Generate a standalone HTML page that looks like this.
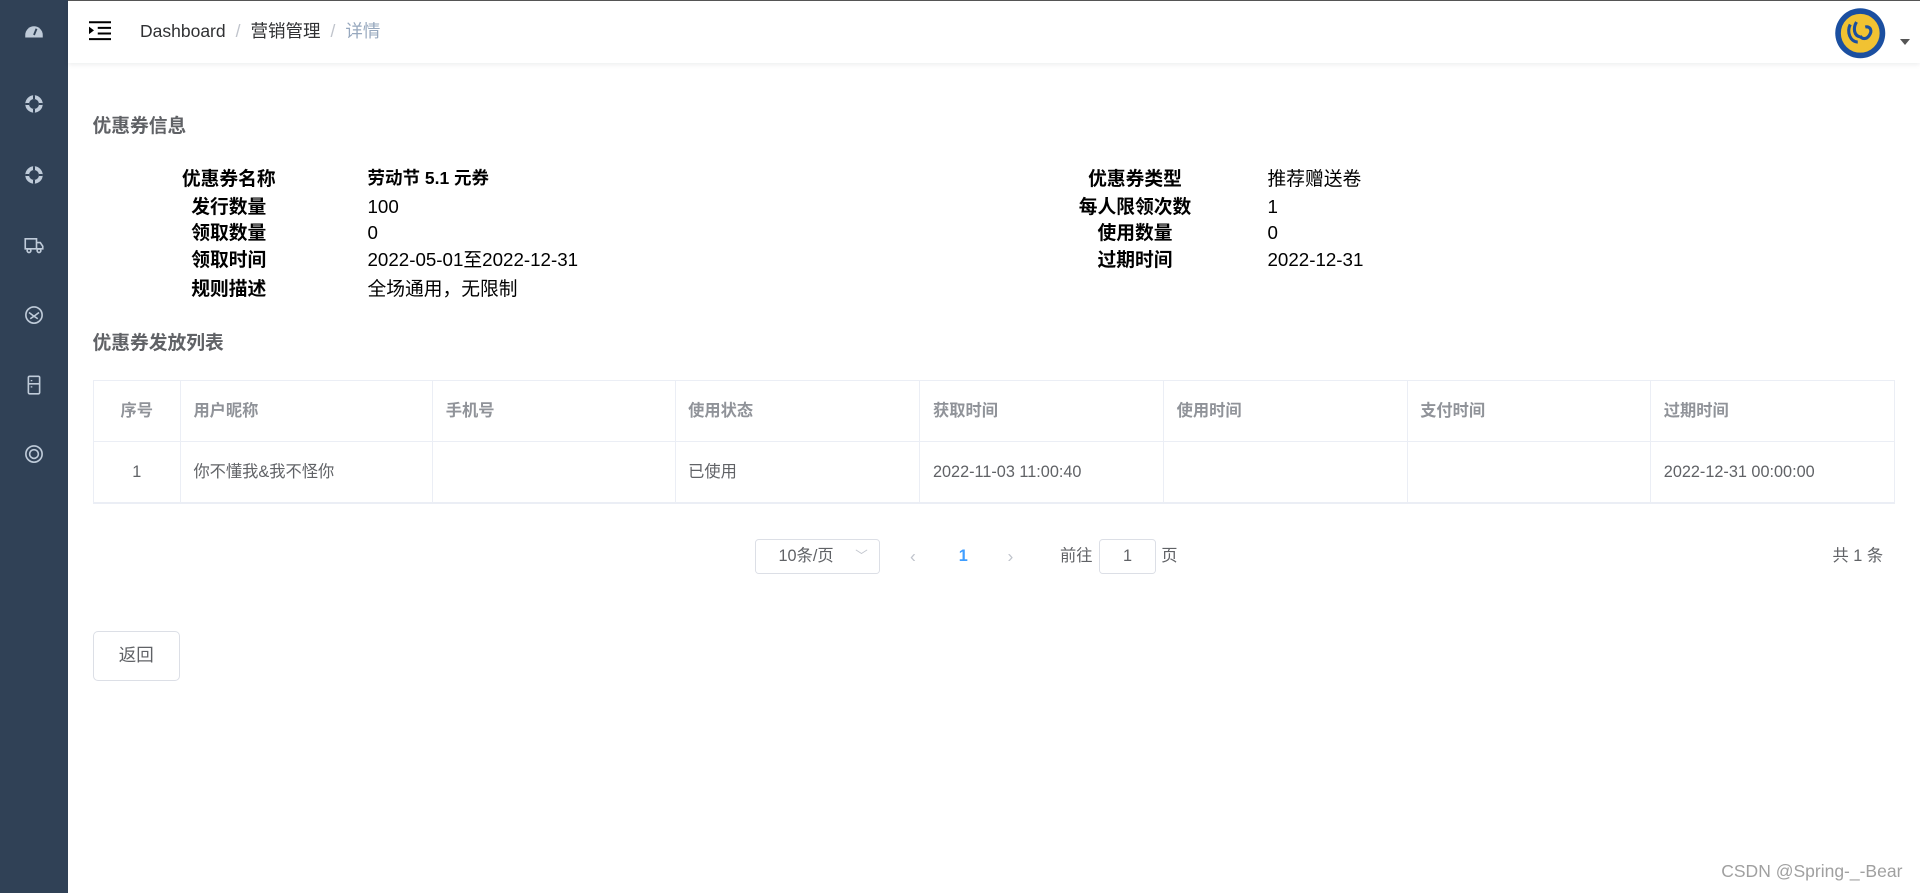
<!DOCTYPE html>
<html><head><meta charset="utf-8"><style>
html{zoom:1.25}
*{box-sizing:border-box;margin:0;padding:0}
body{width:1536px;height:713px;overflow:hidden;position:relative;background:#fff;font-family:"Liberation Sans","Noto Sans CJK SC",sans-serif;color:#606266;font-size:14px}
.side{position:absolute;left:0;top:0;width:54px;height:714px;background:#304156}
.side svg{position:absolute;left:19px;width:16px;height:16px}
.top{position:absolute;left:54px;top:0;right:0;height:50px;box-shadow:0 1px 4px rgba(0,21,41,.08);border-top:1px solid #555}
.abs{position:absolute;white-space:nowrap}
.bc{top:14px;font-size:14px;color:#303133;line-height:20px}
.bc .s{color:#c0c4cc;margin:0 8px}
h3{position:absolute;font-size:15px;font-weight:bold;color:#606266;line-height:20px}
.lab{position:absolute;width:130px;text-align:center;font-weight:bold;color:#000;font-size:15px;line-height:22px;height:22px}
.val{position:absolute;color:#000;font-size:15px;line-height:22px;height:22px;white-space:nowrap}
table{position:absolute;left:74px;top:304px;width:1442px;border-collapse:collapse;font-size:13px}
td,th{border:1px solid #ebeef5;height:49px;text-align:left;padding-left:10px;line-height:20px}
th{color:#909399;font-weight:bold}
tr:last-child td{border-bottom:2px solid #ebeef5}
</style></head><body>
<div class="side">
<svg style="top:16px" viewBox="0 0 16 16"><path d="M1 12a7 7 0 0 1 14 0v2H1z" fill="#bfcbd9"/><path d="M8 12l2-5" stroke="#304156" stroke-width="1.5"/></svg>
<svg style="top:75px" viewBox="0 0 16 16"><circle cx="8" cy="8" r="5.5" fill="none" stroke="#bfcbd9" stroke-width="3"/><path d="M8 1v3M8 12v3M1 8h3M12 8h3" stroke="#304156" stroke-width="1.6"/></svg>
<svg style="top:132px" viewBox="0 0 16 16"><circle cx="8" cy="8" r="5.5" fill="none" stroke="#bfcbd9" stroke-width="3"/><path d="M8 1v3M8 12v3M1 8h3M12 8h3" stroke="#304156" stroke-width="1.6"/></svg>
<svg style="top:188px" viewBox="0 0 16 16" fill="none" stroke="#bfcbd9" stroke-width="1.3"><path d="M1 3h9v8H1zM10 6h3l2 3v2h-5"/><circle cx="4" cy="12.5" r="1.5"/><circle cx="12" cy="12.5" r="1.5"/></svg>
<svg style="top:244px" viewBox="0 0 16 16" fill="none" stroke="#bfcbd9" stroke-width="1.3"><circle cx="8" cy="8" r="6.5"/><path d="M4 6l4 3 4-3M5 11l3-2 3 2"/></svg>
<svg style="top:300px" viewBox="0 0 16 16" fill="none" stroke="#bfcbd9" stroke-width="1.3"><rect x="3.5" y="1" width="9" height="14" rx="1"/><path d="M3.5 7h9M6 4v1M6 9v1"/></svg>
<svg style="top:355px" viewBox="0 0 16 16" fill="none" stroke="#bfcbd9" stroke-width="1.3"><circle cx="8" cy="8" r="6.5"/><circle cx="8" cy="8" r="3.5"/></svg>
</div>
<div class="top">
<svg class="abs" style="left:17px;top:16px" width="18" height="16" viewBox="0 0 18 16"><path d="M0 1h18M7 5.5h11M7 10h11M0 14.5h18" stroke="#000" stroke-width="1.6"/><path d="M0 4.5l4 3-4 3z" fill="#000"/></svg>
<div class="abs bc" style="left:58px">Dashboard<span class="s">/</span>营销管理<span class="s">/</span><span style="color:#97a8be">详情</span></div>
<svg class="abs" style="left:1413px;top:5px" width="42" height="42" viewBox="0 0 42 42"><circle cx="21" cy="21" r="20" fill="#1b4fa0"/><circle cx="21" cy="21" r="16" fill="#f1c232"/><circle cx="21" cy="21" r="16" fill="none" stroke="#1b4fa0" stroke-width="1"/><path d="M13 14c-3 6 0 14 6 14M18 12c-3 5-2 11 3 12M25 16c4-1 6 3 3 7-2 3-6 3-7 0" stroke="#1b4fa0" stroke-width="2.5" fill="none"/></svg>
<div class="abs" style="left:1466px;top:30px;width:0;height:0;border:4px solid transparent;border-top:5px solid #555"></div>
</div>
<h3 style="left:74px;top:90px">优惠券信息</h3>
<div class="lab" style="left:118px;top:132px">优惠券名称</div><div class="val" style="left:294px;top:132px;font-weight:bold;font-size:14px">劳动节 5.1 元券</div>
<div class="lab" style="left:118px;top:154px">发行数量</div><div class="val" style="left:294px;top:154px">100</div>
<div class="lab" style="left:118px;top:175px">领取数量</div><div class="val" style="left:294px;top:175px">0</div>
<div class="lab" style="left:118px;top:197px">领取时间</div><div class="val" style="left:294px;top:197px">2022-05-01至2022-12-31</div>
<div class="lab" style="left:118px;top:220px">规则描述</div><div class="val" style="left:294px;top:220px">全场通用，无限制</div>
<div class="lab" style="left:843px;top:132px">优惠券类型</div><div class="val" style="left:1014px;top:132px">推荐赠送卷</div>
<div class="lab" style="left:843px;top:154px">每人限领次数</div><div class="val" style="left:1014px;top:154px">1</div>
<div class="lab" style="left:843px;top:175px">使用数量</div><div class="val" style="left:1014px;top:175px">0</div>
<div class="lab" style="left:843px;top:197px">过期时间</div><div class="val" style="left:1014px;top:197px">2022-12-31</div>
<h3 style="left:74px;top:264px">优惠券发放列表</h3>
<table>
<colgroup><col style="width:70px"><col style="width:202px"><col style="width:194px"><col style="width:196px"><col style="width:195px"><col style="width:195px"><col style="width:195px"><col style="width:195px"></colgroup>
<tr><th style="text-align:center;padding:0">序号</th><th>用户昵称</th><th>手机号</th><th>使用状态</th><th>获取时间</th><th>使用时间</th><th>支付时间</th><th>过期时间</th></tr>
<tr><td style="text-align:center;padding:0">1</td><td>你不懂我&amp;我不怪你</td><td></td><td>已使用</td><td>2022-11-03 11:00:40</td><td></td><td></td><td>2022-12-31 00:00:00</td></tr>
</table>
<div class="abs" style="left:604px;top:431px;width:100px;height:28px;border:1px solid #dcdfe6;border-radius:3px;font-size:13px;line-height:26px;padding-left:18px">10条/页<span style="position:absolute;right:9px;top:0;color:#c0c4cc;font-size:10px">﹀</span></div>
<div class="abs" style="left:728px;top:435px;color:#c0c4cc;font-size:14px;line-height:20px">&lsaquo;</div>
<div class="abs" style="left:767px;top:435px;color:#409eff;font-weight:bold;font-size:13px;line-height:20px">1</div>
<div class="abs" style="left:806px;top:435px;color:#c0c4cc;font-size:14px;line-height:20px">&rsaquo;</div>
<div class="abs" style="left:848px;top:435px;font-size:13px;line-height:20px">前往</div>
<div class="abs" style="left:879px;top:431px;width:46px;height:28px;border:1px solid #dcdfe6;border-radius:3px;text-align:center;line-height:26px;font-size:13px">1</div>
<div class="abs" style="left:929px;top:435px;font-size:13px;line-height:20px">页</div>
<div class="abs" style="left:1466px;top:435px;font-size:13px;line-height:20px">共 1 条</div>
<div class="abs" style="left:74px;top:505px;width:70px;height:40px;border:1px solid #dcdfe6;border-radius:4px;text-align:center;line-height:38px;font-size:14px">返回</div>
<div class="abs" style="left:1377px;top:687px;color:#a0a0a0;font-size:14px;line-height:20px">CSDN @Spring-_-Bear</div>
</body></html>
